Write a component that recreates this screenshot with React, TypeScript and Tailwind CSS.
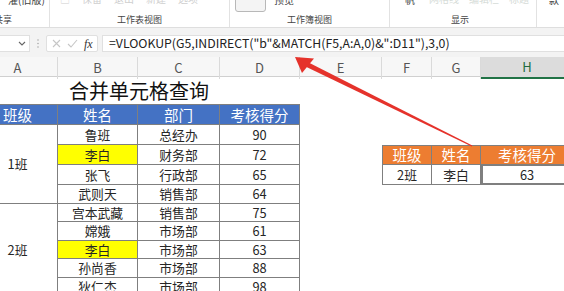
import React from "react";

const C = "grid grid-cols-[80px_80px_82px_80px_82px_50px_49px_92px]";

type Row = { name: string; dept: string; score: string; hl?: boolean };
const rows: Row[] = [
  { name: "鲁班", dept: "总经办", score: "90" },
  { name: "李白", dept: "财务部", score: "72", hl: true },
  { name: "张飞", dept: "行政部", score: "65" },
  { name: "武则天", dept: "销售部", score: "64" },
  { name: "宫本武藏", dept: "销售部", score: "75" },
  { name: "嫦娥", dept: "市场部", score: "61" },
  { name: "李白", dept: "市场部", score: "63", hl: true },
  { name: "孙尚香", dept: "市场部", score: "88" },
  { name: "狄仁杰", dept: "市场部", score: "98" },
];

const rowStart = [
  "row-start-3",
  "row-start-4",
  "row-start-5",
  "row-start-6",
  "row-start-7",
  "row-start-8",
  "row-start-9",
  "row-start-10",
  "row-start-11",
];

function Cell({
  className,
  children,
}: {
  className: string;
  children?: React.ReactNode;
}) {
  return (
    <div
      className={
        "flex items-center justify-center border-[#7f7f7f] " + className
      }
    >
      {children}
    </div>
  );
}

export default function App() {
  return (
    <div className="relative w-[564px] h-[291px] overflow-hidden bg-white font-['Noto_Sans_CJK_SC',sans-serif] text-[#262626]">
      {/* Ribbon */}
      <div className="h-[28px] flex bg-white border-b border-[#dedede]">
        <div className="w-[50px] shrink-0 flex flex-col border-r border-[#e2e2e2]">
          <div className="h-[13px] overflow-hidden pl-[8px]">
            <div className="-mt-[7px] text-[10px] leading-[14px] text-[#444]">
              灌(旧版)
            </div>
          </div>
          <div className="h-[14px] flex items-center overflow-hidden">
            <span className="-ml-[6px] text-[9px] text-[#444] whitespace-nowrap">
              共享
            </span>
          </div>
        </div>
        <div className="w-[180px] shrink-0 flex flex-col border-r border-[#e2e2e2]">
          <div className="h-[13px] overflow-hidden pl-[10px] flex gap-[10px]">
            <div className="-mt-[8px] flex gap-[12px] text-[10px] leading-[14px] text-[#cfcfcf]">
              <span>□</span>
              <span>保留</span>
              <span>退出</span>
              <span>新建</span>
              <span>选项</span>
            </div>
          </div>
          <div className="h-[14px] flex items-center justify-center text-[9px] text-[#444]">
            工作表视图
          </div>
        </div>
        <div className="w-[160px] shrink-0 flex flex-col border-r border-[#e2e2e2]">
          <div className="h-[13px] overflow-hidden flex items-start pl-[5px] gap-[8px]">
            <div className="-mt-[4px] w-[31px] h-[16px] rounded-[3px] border border-[#b8b8b8] bg-[#f4f4f4]" />
            <div className="-mt-[7px] text-[10px] leading-[14px] text-[#444]">
              预览
            </div>
          </div>
          <div className="h-[14px] flex items-center justify-center text-[9px] text-[#444]">
            工作簿视图
          </div>
        </div>
        <div className="w-[147px] shrink-0 flex flex-col border-r border-[#e2e2e2]">
          <div className="h-[13px] overflow-hidden flex items-start pl-[15px] gap-[14px]">
            <div className="-mt-[7px] text-[10px] leading-[14px] text-[#444]">
              帆
            </div>
            <div className="-mt-[8px] flex gap-[10px] text-[10px] leading-[14px] text-[#d6dcd8]">
              <span>网格线</span>
              <span>编辑栏</span>
              <span>标题</span>
            </div>
          </div>
          <div className="h-[14px] flex items-center justify-center pr-[6px] text-[9px] text-[#444]">
            显示
          </div>
        </div>
        <div className="flex-1 flex flex-col">
          <div className="h-[13px] overflow-hidden pl-[12px]">
            <div className="-mt-[7px] text-[10px] leading-[14px] text-[#444]">
              款
            </div>
          </div>
        </div>
      </div>

      {/* Formula bar */}
      <div className="h-[29px] bg-[#f3f3f3] flex items-start pt-[7px]">
        <div className="w-[30px] h-[17px] bg-white border border-[#e0e0e0] border-l-0 flex items-center justify-end pr-[3px]">
          <svg width="8" height="5" viewBox="0 0 8 5">
            <path d="M1 1 L4 4 L7 1" fill="none" stroke="#666" strokeWidth="1.1" />
          </svg>
        </div>
        <div className="w-[16px] h-[17px] flex items-center justify-center">
          <svg width="2" height="9" viewBox="0 0 2 9">
            <circle cx="1" cy="1" r="0.8" fill="#aaa" />
            <circle cx="1" cy="4.5" r="0.8" fill="#aaa" />
            <circle cx="1" cy="8" r="0.8" fill="#aaa" />
          </svg>
        </div>
        <div className="w-[52px] h-[17px] bg-white border border-[#e0e0e0] rounded-[2px] flex items-center pl-[5px] gap-[6px]">
          <svg width="9" height="9" viewBox="0 0 9 9">
            <path d="M1 1 L8 8 M8 1 L1 8" stroke="#c6c6c6" strokeWidth="1.1" />
          </svg>
          <svg width="11" height="9" viewBox="0 0 11 9">
            <path d="M1 5 L4 8 L10 1" fill="none" stroke="#c6c6c6" strokeWidth="1.1" />
          </svg>
          <span className="font-['Liberation_Serif',serif] italic text-[12px] leading-none text-[#333]">
            fx
          </span>
        </div>
        <div className="ml-[4px] flex-1 h-[17px] bg-white border border-[#e0e0e0] border-r-0 flex items-center pl-[6px] text-[12.3px] text-[#222] whitespace-nowrap">
          =VLOOKUP(G5,INDIRECT("b"&amp;MATCH(F5,A:A,0)&amp;":D11"),3,0)
        </div>
      </div>

      {/* Column headers */}
      <div className={C + " -ml-[22px] h-[20px] bg-[#f7f7f7] border-b border-[#d0d0d0] text-[13px] text-[#555]"}>
        {["A", "B", "C", "D", "E", "F", "G"].map((l) => (
          <div
            key={l}
            className="flex items-center justify-center border-r border-[#dadada]"
          >
            {l}
          </div>
        ))}
        <div className="flex items-center justify-center bg-[#dcdcdc] border-b-2 border-[#217346] text-[#1e6b40]">
          H
        </div>
      </div>

      {/* Sheet */}
      <div
        className={
          C +
          " -ml-[22px] grid-rows-[27px_21px_20px_20px_20px_19px_18px_19px_18px_19px_19px] text-[12.8px]"
        }
      >
        <div className="col-start-1 col-span-4 row-start-1 flex items-center justify-center text-[20px] font-normal text-[#111]">
          合并单元格查询
        </div>

        {["班级", "姓名", "部门", "考核得分"].map((h, i) => (
          <Cell
            key={h}
            className={
              "row-start-2 border-t border-r border-b bg-[#4472c4] text-white text-[14.5px] " +
              ["col-start-1", "col-start-2", "col-start-3", "col-start-4"][i]
            }
          >
            {h}
          </Cell>
        ))}

        <Cell className="col-start-1 row-start-3 row-span-4 border-r border-b">
          1班
        </Cell>
        <Cell className="col-start-1 row-start-7 row-span-5 border-r border-b">
          2班
        </Cell>

        {rows.map((r, i) => (
          <React.Fragment key={i}>
            <Cell
              className={
                "col-start-2 border-r border-b " +
                rowStart[i] +
                (r.hl ? " bg-[#ffff00]" : "")
              }
            >
              {r.name}
            </Cell>
            <Cell className={"col-start-3 border-r border-b " + rowStart[i]}>
              {r.dept}
            </Cell>
            <Cell className={"col-start-4 border-r border-b " + rowStart[i]}>
              {r.score}
            </Cell>
          </React.Fragment>
        ))}

        {/* Lookup table */}
        <Cell className="col-start-6 row-start-4 border-l border-t border-r border-b bg-[#ed7d31] text-white text-[14.5px]">
          班级
        </Cell>
        <Cell className="col-start-7 row-start-4 border-t border-r border-b bg-[#ed7d31] text-white text-[14.5px]">
          姓名
        </Cell>
        <Cell className="col-start-8 row-start-4 border-t border-b bg-[#ed7d31] text-white text-[14.5px]">
          考核得分
        </Cell>
        <Cell className="col-start-6 row-start-5 border-l border-r border-b">
          2班
        </Cell>
        <Cell className="col-start-7 row-start-5 border-r border-b">李白</Cell>
        <Cell className="col-start-8 row-start-5 border-2 border-[#3a8a5c] -mt-px">
          63
        </Cell>
      </div>

      {/* Red arrow annotation */}
      <svg
        className="absolute left-0 top-0 pointer-events-none"
        width="564"
        height="291"
        viewBox="0 0 564 291"
      >
        <polygon
          points="307.1,61.8 304.9,66.2 471.7,146.5 472.3,145.5"
          fill="#e5322b"
        />
        <polygon points="295,57 314,58.5 302,73" fill="#e5322b" />
      </svg>
    </div>
  );
}
